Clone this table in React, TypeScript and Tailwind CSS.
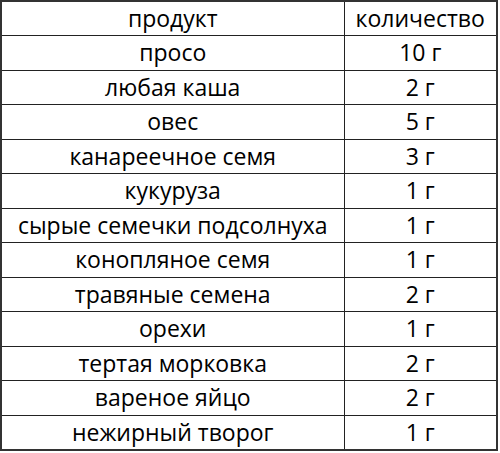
import React from "react";

const rows: [string, string][] = [
  ["просо", "10 г"],
  ["любая каша", "2 г"],
  ["овес", "5 г"],
  ["канареечное семя", "3 г"],
  ["кукуруза", "1 г"],
  ["сырые семечки подсолнуха", "1 г"],
  ["конопляное семя", "1 г"],
  ["травяные семена", "2 г"],
  ["орехи", "1 г"],
  ["тертая морковка", "2 г"],
  ["вареное яйцо", "2 г"],
  ["нежирный творог", "1 г"],
];

export default function App() {
  return (
    <div className="w-[500px] h-[453px] bg-white" style={{ fontFamily: '"Open Sans", "Noto Sans", sans-serif' }}>
      <table className="border-collapse border-2 border-[#333] text-black text-[23px] font-medium w-[498px] table-fixed">
        <colgroup>
          <col className="w-[343px]" />
          <col />
        </colgroup>
        <tbody>
          <tr className="h-[34.5px]">
            <td className="border border-[#222] text-center p-0 leading-none">продукт</td>
            <td className="border border-[#222] text-center p-0 leading-none">количество</td>
          </tr>
          {rows.map(([a, b]) => (
            <tr key={a} className="h-[34.5px]">
              <td className="border border-[#222] text-center p-0 leading-none">{a}</td>
              <td className="border border-[#222] text-center p-0 leading-none">{b}</td>
            </tr>
          ))}
        </tbody>
      </table>
    </div>
  );
}
